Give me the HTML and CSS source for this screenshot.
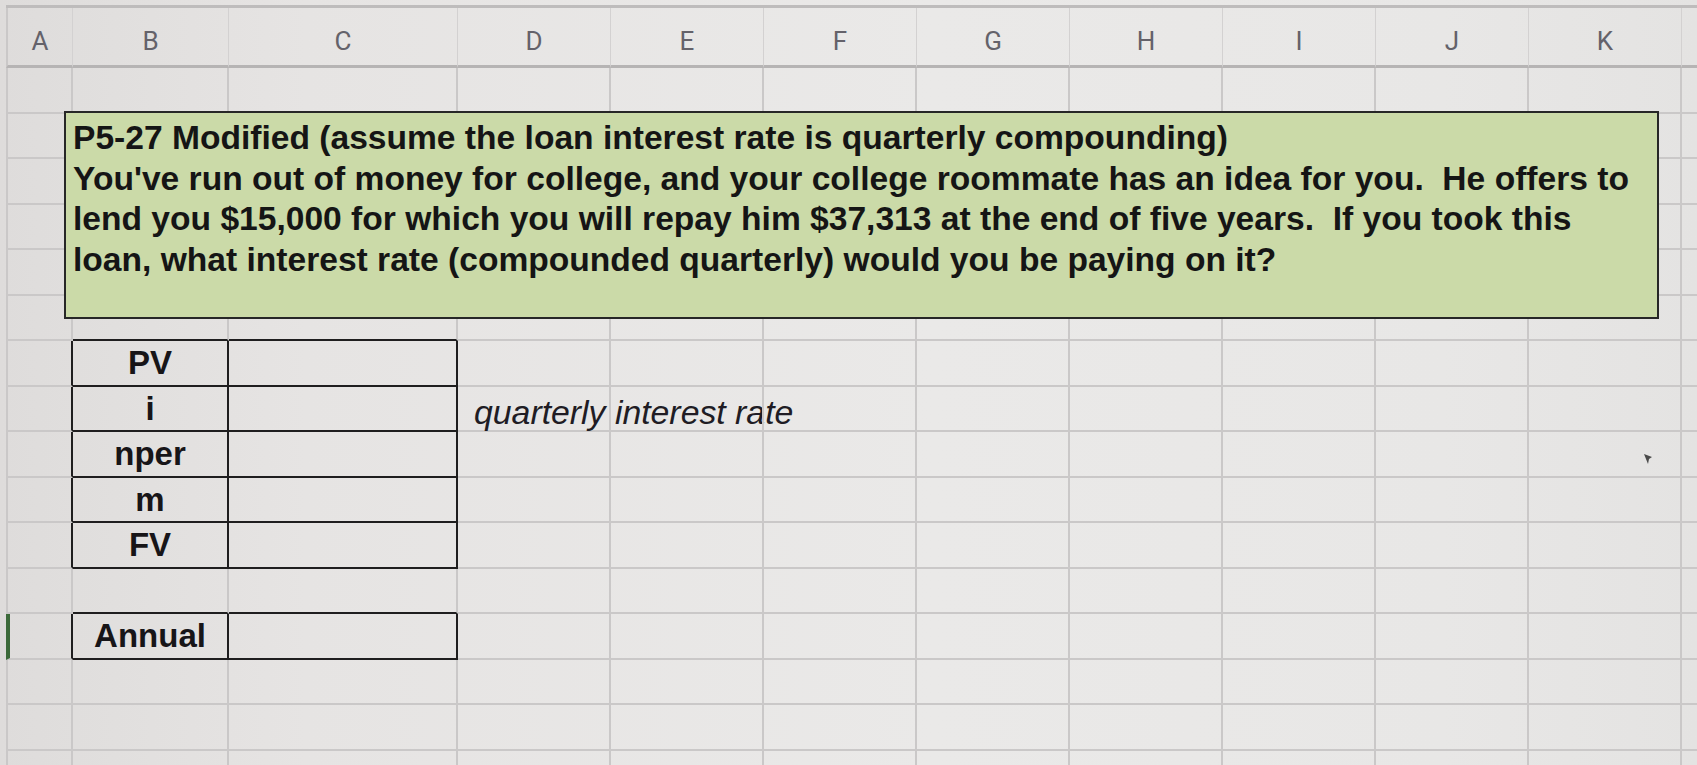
FILE: index.html
```html
<!DOCTYPE html>
<html lang="en">
<head>
<meta charset="utf-8">
<title>P5-27 Modified</title>
<link rel="stylesheet" href="styles.css">
</head>
<body>
<div class="sheet">
  <div class="heads">
    <div class="h">A</div><div class="h">B</div><div class="h">C</div><div class="h">D</div><div class="h">E</div><div class="h">F</div><div class="h">G</div><div class="h">H</div><div class="h">I</div><div class="h">J</div><div class="h">K</div><div class="h"></div>
  </div>

  <div class="row"><div class="c"></div><div class="c"></div><div class="c"></div><div class="c"></div><div class="c"></div><div class="c"></div><div class="c"></div><div class="c"></div><div class="c"></div><div class="c"></div><div class="c"></div><div class="c"></div></div>
  <div class="row"><div class="c"></div><div class="c"></div><div class="c"></div><div class="c"></div><div class="c"></div><div class="c"></div><div class="c"></div><div class="c"></div><div class="c"></div><div class="c"></div><div class="c"></div><div class="c"></div></div>
  <div class="row"><div class="c"></div><div class="c"></div><div class="c"></div><div class="c"></div><div class="c"></div><div class="c"></div><div class="c"></div><div class="c"></div><div class="c"></div><div class="c"></div><div class="c"></div><div class="c"></div></div>
  <div class="row"><div class="c"></div><div class="c"></div><div class="c"></div><div class="c"></div><div class="c"></div><div class="c"></div><div class="c"></div><div class="c"></div><div class="c"></div><div class="c"></div><div class="c"></div><div class="c"></div></div>
  <div class="row"><div class="c"></div><div class="c"></div><div class="c"></div><div class="c"></div><div class="c"></div><div class="c"></div><div class="c"></div><div class="c"></div><div class="c"></div><div class="c"></div><div class="c"></div><div class="c"></div></div>
  <div class="row"><div class="c"></div><div class="c db"></div><div class="c db"></div><div class="c"></div><div class="c"></div><div class="c"></div><div class="c"></div><div class="c"></div><div class="c"></div><div class="c"></div><div class="c"></div><div class="c"></div></div>
  <div class="row"><div class="c dr"></div><div class="c bx lbl">PV</div><div class="c bx"></div><div class="c"></div><div class="c"></div><div class="c"></div><div class="c"></div><div class="c"></div><div class="c"></div><div class="c"></div><div class="c"></div><div class="c"></div></div>
  <div class="row"><div class="c dr"></div><div class="c bx lbl">i</div><div class="c bx"></div><div class="c note">quarterly interest rate</div><div class="c"></div><div class="c"></div><div class="c"></div><div class="c"></div><div class="c"></div><div class="c"></div><div class="c"></div><div class="c"></div></div>
  <div class="row"><div class="c dr"></div><div class="c bx lbl">nper</div><div class="c bx"></div><div class="c"></div><div class="c"></div><div class="c"></div><div class="c"></div><div class="c"></div><div class="c"></div><div class="c"></div><div class="c"></div><div class="c"></div></div>
  <div class="row"><div class="c dr"></div><div class="c bx lbl">m</div><div class="c bx"></div><div class="c"></div><div class="c"></div><div class="c"></div><div class="c"></div><div class="c"></div><div class="c"></div><div class="c"></div><div class="c"></div><div class="c"></div></div>
  <div class="row"><div class="c dr"></div><div class="c bx lbl">FV</div><div class="c bx"></div><div class="c"></div><div class="c"></div><div class="c"></div><div class="c"></div><div class="c"></div><div class="c"></div><div class="c"></div><div class="c"></div><div class="c"></div></div>
  <div class="row"><div class="c"></div><div class="c db"></div><div class="c db"></div><div class="c"></div><div class="c"></div><div class="c"></div><div class="c"></div><div class="c"></div><div class="c"></div><div class="c"></div><div class="c"></div><div class="c"></div></div>
  <div class="row"><div class="c dr sel"></div><div class="c bx lbl">Annual</div><div class="c bx"></div><div class="c"></div><div class="c"></div><div class="c"></div><div class="c"></div><div class="c"></div><div class="c"></div><div class="c"></div><div class="c"></div><div class="c"></div></div>
  <div class="row"><div class="c"></div><div class="c"></div><div class="c"></div><div class="c"></div><div class="c"></div><div class="c"></div><div class="c"></div><div class="c"></div><div class="c"></div><div class="c"></div><div class="c"></div><div class="c"></div></div>
  <div class="row"><div class="c"></div><div class="c"></div><div class="c"></div><div class="c"></div><div class="c"></div><div class="c"></div><div class="c"></div><div class="c"></div><div class="c"></div><div class="c"></div><div class="c"></div><div class="c"></div></div>
  <div class="row"><div class="c"></div><div class="c"></div><div class="c"></div><div class="c"></div><div class="c"></div><div class="c"></div><div class="c"></div><div class="c"></div><div class="c"></div><div class="c"></div><div class="c"></div><div class="c"></div></div>

  <div class="textbox">P5-27 Modified (assume the loan interest rate is quarterly compounding)<br>You've run out of money for college, and your college roommate has an idea for you.&nbsp; He offers to<br>lend you $15,000 for which you will repay him $37,313 at the end of five years.&nbsp; If you took this<br>loan, what interest rate (compounded quarterly) would you be paying on it?</div>

  <svg class="cursor" width="10" height="12" viewBox="0 0 10 12"><path d="M1 1 L9 4 L6 6 L5 11 Z" fill="#4a4a4a"/></svg>
</div>
</body>
</html>
```

FILE: styles.css
```css
* { box-sizing: border-box; margin: 0; padding: 0; }

html, body {
  width: 1697px;
  height: 765px;
  overflow: hidden;
}

body {
  background: #e6e4e3;
  font-family: "Liberation Sans", Arial, sans-serif;
}

.sheet {
  position: relative;
  width: 1697px;
  height: 765px;
  overflow: hidden;
  padding: 5px 0 0 6px;
  background: linear-gradient(90deg, #dedcdb 0%, #e6e4e3 18%, #eae9e8 55%, #e8e7e6 85%, #e4e3e2 100%);
}

.heads,
.row {
  display: grid;
  grid-template-columns: 67px 156px 229px 153px 153px 153px 153px 153px 153px 153px 153px 40px;
}

.heads {
  height: 63px;
  grid-template-rows: 60px;
  border-top: 3px solid #bebcbc;
}

.h {
  display: flex;
  align-items: center;
  justify-content: center;
  padding-top: 9px;
  border-right: 1px solid #d3d1d1;
  border-bottom: 3px solid #b6b4b4;
  font-family: Roboto, "Liberation Sans", sans-serif;
  font-size: 26px;
  line-height: 1;
  color: #64626a;
}

.h:first-child,
.c:first-child {
  border-left: 2px solid #cac8c8;
}

.row {
  height: 45.5px;
  grid-template-rows: 45.5px;
}

.c {
  min-height: 0;
  overflow: visible;
  border-right: 2px solid #cac8c8;
  border-bottom: 2px solid #cac8c8;
}

.dr { border-right-color: #1f1e1f; }
.db { border-bottom-color: #1f1e1f; }
.bx {
  border-right-color: #1f1e1f;
  border-bottom-color: #1f1e1f;
}

.c.sel {
  border-left: 4px solid #3c6a3a;
}

.lbl {
  display: flex;
  align-items: center;
  justify-content: center;
  font-weight: 700;
  font-size: 33px;
  line-height: 1;
  color: #171518;
}

.note {
  display: flex;
  align-items: center;
  padding: 10px 0 0 16px;
  font-style: italic;
  font-size: 33.8px;
  line-height: 1;
  white-space: nowrap;
  color: #201c24;
}

.textbox {
  position: absolute;
  left: 64px;
  top: 111px;
  width: 1595px;
  height: 208px;
  border: 2px solid #272727;
  background: #cbdaa8;
  padding: 5px 8px 0 7px;
  font-weight: 700;
  font-size: 33.6px;
  line-height: 40.5px;
  color: #151515;
  white-space: nowrap;
}

.cursor {
  position: absolute;
  left: 1643px;
  top: 453px;
}
```
